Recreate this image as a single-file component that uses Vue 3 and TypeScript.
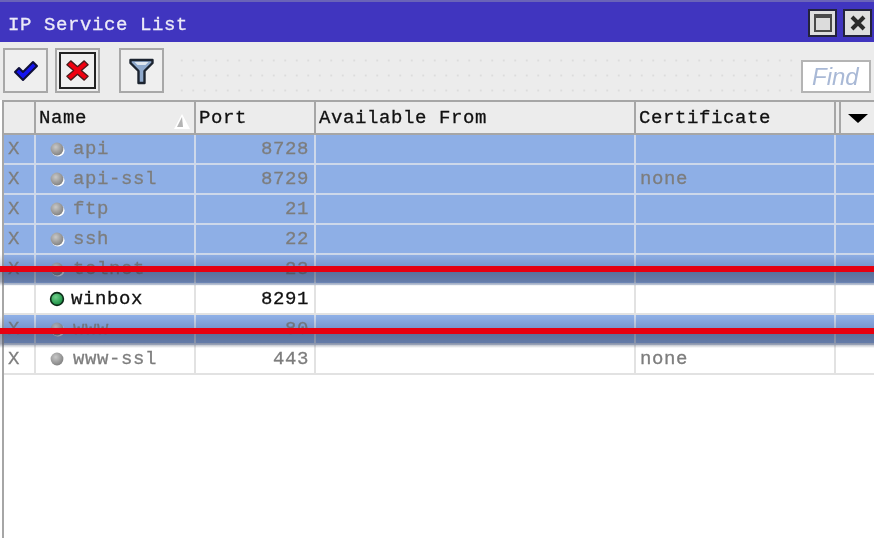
<script setup lang="ts">
interface Service {
  name: string
  port: number
  cert: string
  selected: boolean
  running: boolean
}

const services: Service[] = [
  { name: 'api', port: 8728, cert: '', selected: true, running: false },
  { name: 'api-ssl', port: 8729, cert: 'none', selected: true, running: false },
  { name: 'ftp', port: 21, cert: '', selected: true, running: false },
  { name: 'ssh', port: 22, cert: '', selected: true, running: false },
  { name: 'telnet', port: 23, cert: '', selected: true, running: false },
  { name: 'winbox', port: 8291, cert: '', selected: false, running: true },
  { name: 'www', port: 80, cert: '', selected: true, running: false },
  { name: 'www-ssl', port: 443, cert: 'none', selected: false, running: false },
]
</script>

<template>
  <div class="window">
    <header class="titlebar">
      <span class="title">IP Service List</span>
      <div class="win-buttons">
        <button class="win-btn" aria-label="Maximize">
          <svg width="20" height="20" viewBox="0 0 20 20">
            <rect x="2" y="2" width="16" height="16" fill="#dcdcdc" stroke="#4a4a4a" stroke-width="2" />
            <rect x="2" y="2" width="16" height="3" fill="#4a4a4a" />
          </svg>
        </button>
        <button class="win-btn" aria-label="Close">
          <svg width="18" height="18" viewBox="0 0 18 18">
            <path d="M3 3 L15 15 M15 3 L3 15" stroke="#2a2a2a" stroke-width="4" />
          </svg>
        </button>
      </div>
    </header>

    <div class="toolbar">
      <button class="tool" aria-label="Enable">
        <svg width="28" height="24" viewBox="0 0 28 24">
          <path d="M3 13 L7 9 L11 13 L21 3 L25 7 L11 21 Z" fill="#1414f0" stroke="#10103a" stroke-width="2" stroke-linejoin="round" />
        </svg>
      </button>
      <button class="tool tool-active" aria-label="Disable">
        <svg width="25" height="25" viewBox="0 0 26 26">
          <path d="M6 3 L13 9 L20 3 L24 7 L17 13 L24 19 L20 23 L13 17 L6 23 L2 19 L9 13 L2 7 Z" fill="#f00010" stroke="#4a1a1a" stroke-width="1.4" stroke-linejoin="round" />
        </svg>
      </button>
      <button class="tool tool-filter" aria-label="Filter">
        <svg width="27" height="28" viewBox="0 0 26 28">
          <path d="M2 3 H24 V6 L16 14 V26 H10 V14 L2 6 Z" fill="#8fa9cc" stroke="#1c2430" stroke-width="2.4" stroke-linejoin="round" />
          <path d="M6 5 H20 L17 8 H9 Z" fill="#dfe6ee" />
        </svg>
      </button>
      <div class="dots"></div>
      <div class="find">Find</div>
    </div>

    <div class="table">
      <div class="head">
        <div class="hcell"></div>
        <div class="hcell hname">Name<span class="sort"></span></div>
        <div class="hcell">Port</div>
        <div class="hcell">Available From</div>
        <div class="hcell">Certificate</div>
        <div class="hcell hspacer"></div>
        <div class="hcell hmenu"><span class="caret"></span></div>
      </div>

      <div
        v-for="s in services"
        :key="s.name"
        class="row"
        :class="{ selected: s.selected, running: s.running }"
      >
        <div class="cell">{{ s.running ? '' : 'X' }}</div>
        <div class="cell cname">
          <svg class="dot" width="16" height="16" viewBox="0 0 16 16">
            <defs>
              <radialGradient :id="'g-' + s.name" cx="40%" cy="35%" r="70%">
                <stop offset="0" :stop-color="s.running ? '#6fd08a' : '#c8c8c8'" />
                <stop offset="1" :stop-color="s.running ? '#12883c' : '#7e7e7e'" />
              </radialGradient>
            </defs>
            <ellipse v-if="!s.running" cx="9" cy="9.5" rx="6.5" ry="6" fill="#fff" />
            <circle cx="8" cy="8" r="6.4" :fill="`url(#g-${s.name})`" :stroke="s.running ? '#0c2a18' : 'none'" stroke-width="1.6" />
          </svg>
          <span>{{ s.name }}</span>
        </div>
        <div class="cell cport">{{ s.port }}</div>
        <div class="cell"></div>
        <div class="cell">{{ s.cert }}</div>
        <div class="cell clast"></div>
      </div>

      <div class="scar scar-one"></div>
      <div class="scar scar-two"></div>
    </div>
  </div>
</template>

<style>
html,
body {
  margin: 0;
  background: #fff;
  overflow: hidden;
}
</style>

<style scoped>
.window {
  width: 874px;
  height: 538px;
  display: flex;
  flex-direction: column;
  background: #fff;
  font-family: "Liberation Mono", monospace;
  font-size: 19px;
  letter-spacing: 0.6px;
  -webkit-text-stroke: 0.3px currentColor;
  color: #111;
  overflow: hidden;
  filter: blur(0.45px);
}

.titlebar {
  height: 40px;
  flex: none;
  display: flex;
  align-items: center;
  justify-content: space-between;
  background: #4035bf;
  border-top: 2px solid #6a64b8;
  padding: 0 2px 0 8px;
  box-sizing: content-box;
}
.title {
  color: #eceaf8;
  position: relative;
  top: 3px;
}
.win-buttons {
  display: flex;
  gap: 6px;
  margin-top: 2px;
}
.win-btn {
  width: 29px;
  height: 28px;
  padding: 0;
  display: flex;
  align-items: center;
  justify-content: center;
  background: #dedede;
  border: 2px solid #23233c;
  box-sizing: border-box;
}

.toolbar {
  height: 58px;
  flex: none;
  display: flex;
  align-items: flex-start;
  background: #ececec;
  padding: 6px 3px 0 3px;
  box-sizing: border-box;
}
.tool {
  width: 45px;
  height: 45px;
  padding: 0;
  display: flex;
  align-items: center;
  justify-content: center;
  background: #efefef;
  border: 2px solid #a8a8a8;
  box-sizing: border-box;
  margin-right: 7px;
}
.tool-active {
  box-shadow: inset 0 0 0 2px #efefef, inset 0 0 0 4px #222;
  margin-right: 19px;
}
.tool-filter {
  margin-right: 12px;
}
.dots {
  flex: 1;
  height: 45px;
  margin-top: 5px;
  background-image: radial-gradient(circle, #dcdcdc 1px, transparent 1.2px);
  background-size: 11.5px 15px;
}
.find {
  width: 70px;
  height: 33px;
  margin: 12px 0 0 6px;
  box-sizing: border-box;
  background: #fff;
  border: 2px solid #b4b4b4;
  font-family: "Liberation Sans", sans-serif;
  font-style: italic;
  font-size: 24px;
  letter-spacing: 0;
  -webkit-text-stroke: 0;
  line-height: 29px;
  padding-left: 9px;
  color: #a9b9d6;
}

.table {
  flex: 1;
  position: relative;
  margin-left: 2px;
  border-left: 2px solid #a6a6a6;
}
.head {
  display: grid;
  grid-template-columns: 32px 160px 120px 320px 200px 5px 1fr;
  height: 35px;
  box-sizing: border-box;
  background: #ececec;
  border-top: 2px solid #a6a6a6;
  border-bottom: 2px solid #a6a6a6;
  line-height: 33px;
}
.hcell {
  border-right: 2px solid #a6a6a6;
  padding-left: 3px;
  box-sizing: border-box;
  position: relative;
  white-space: nowrap;
}
.hspacer,
.hmenu {
  padding: 0;
}
.hmenu {
  border-right: none;
  display: flex;
  align-items: center;
  justify-content: center;
}
.sort {
  position: absolute;
  right: 4px;
  top: 12px;
  width: 0;
  height: 0;
  border-left: 8px solid transparent;
  border-right: 8px solid transparent;
  border-bottom: 15px solid #fff;
}
.sort::after {
  content: "";
  position: absolute;
  left: -5px;
  top: 3px;
  width: 0;
  height: 0;
  border-left: 5px solid transparent;
  border-right: 1px solid transparent;
  border-bottom: 10px solid #b4b4b4;
}
.caret {
  width: 0;
  height: 0;
  border-left: 10px solid transparent;
  border-right: 10px solid transparent;
  border-top: 9px solid #000;
}

.row {
  display: grid;
  height: 30px;
  box-sizing: border-box;
  grid-template-columns: 32px 160px 120px 320px 200px 1fr;
  line-height: 29px;
  border-bottom: 2px solid #e2e2e2;
  background: #fff;
  color: #7d7d7d;
}
.row.selected {
  background: #8eafe6;
  border-bottom-color: #cdd8ea;
}
.row.running {
  color: #111;
}
.cell {
  border-right: 2px solid #e2e2e2;
  box-sizing: border-box;
  padding-left: 4px;
  white-space: nowrap;
  overflow: hidden;
}
.row.selected .cell {
  border-right-color: #cdd8ea;
}
.clast {
  border-right: none;
}
.cname {
  display: flex;
  align-items: center;
  padding-left: 13px;
  gap: 8px;
}
.row.running .cname {
  gap: 6px;
}
.cport {
  text-align: right;
  padding-right: 5px;
}

.scar {
  position: absolute;
  left: -4px;
  right: 0;
  height: 6px;
  background: #e60010;
}
.scar::before {
  content: "";
  position: absolute;
  left: 0;
  right: 0;
  bottom: 6px;
  height: 12px;
  background: linear-gradient(to bottom, rgba(60, 80, 130, 0), rgba(60, 80, 130, 0.25));
}
.scar::after {
  content: "";
  position: absolute;
  left: 0;
  right: 0;
  top: 6px;
  height: 14px;
  background: linear-gradient(to bottom, rgba(40, 50, 80, 0.5) 0, rgba(40, 50, 80, 0.4) 70%, rgba(40, 50, 80, 0) 100%);
}
.scar-one {
  top: 166px;
}
.scar-two {
  top: 228px;
}
</style>
